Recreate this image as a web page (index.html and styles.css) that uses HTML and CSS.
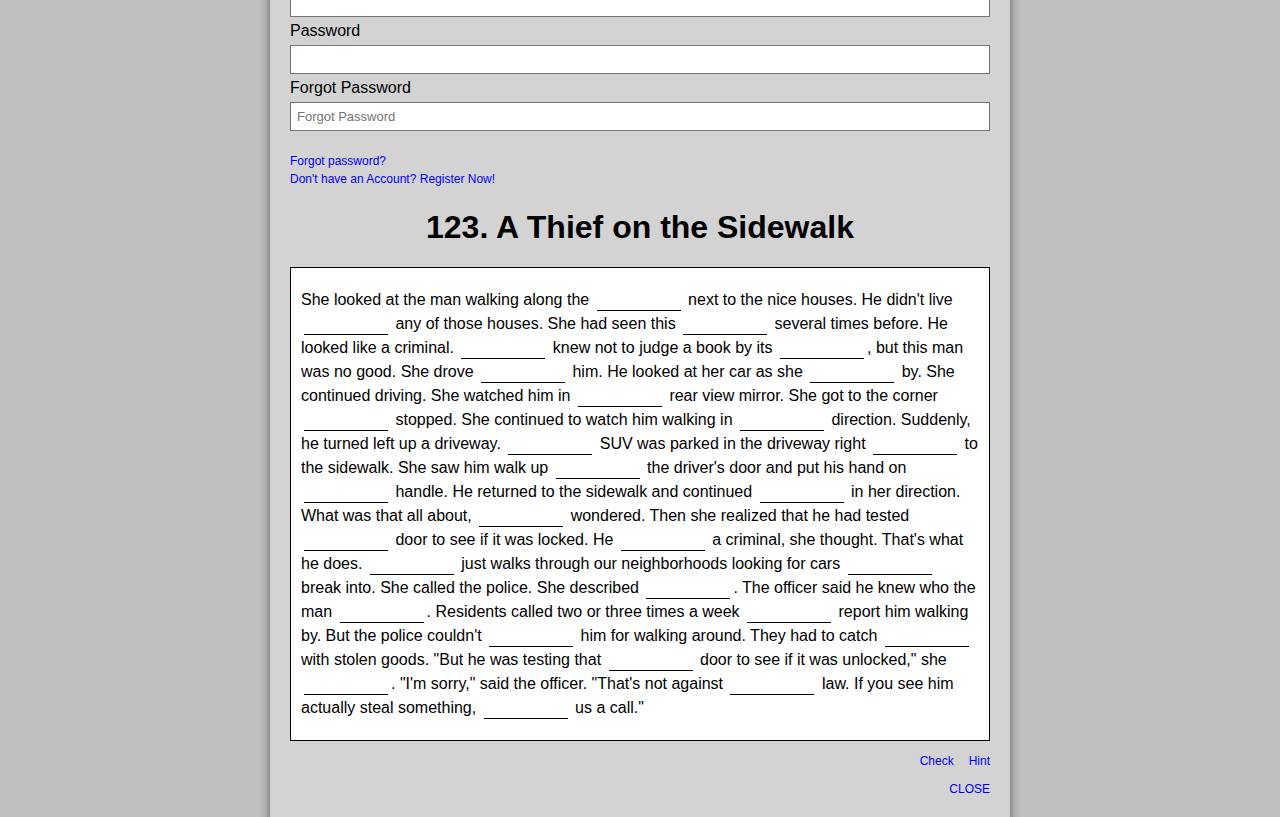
FILE: index.html
```html
<!DOCTYPE html>
<html lang="en">
<head>
<meta charset="utf-8">
<title>123. A Thief on the Sidewalk</title>
<link rel="stylesheet" href="styles.css">
</head>
<body>
<div class="panel">
  <form class="login">
    <label class="field-label">Username</label>
    <input class="field" type="text">
    <label class="field-label">Password</label>
    <input class="field" type="password">
    <label class="field-label">Forgot Password</label>
    <input class="field" type="text" placeholder="Forgot Password">
  </form>
  <div class="account-links">
    <a href="#">Forgot password?</a><br>
    <a href="#">Don't have an Account? Register Now!</a>
  </div>
  <h1 class="title">123. A Thief on the Sidewalk</h1>
  <div class="story">
    She looked at the man walking along the <input class="blank" type="text"> next to the nice houses. He didn't live <input class="blank" type="text"> any of those houses. She had seen this <input class="blank" type="text"> several times before. He looked like a criminal. <input class="blank" type="text"> knew not to judge a book by its <input class="blank" type="text">, but this man was no good. She drove <input class="blank" type="text"> him. He looked at her car as she <input class="blank" type="text"> by. She continued driving. She watched him in <input class="blank" type="text"> rear view mirror. She got to the corner <input class="blank" type="text"> stopped. She continued to watch him walking in <input class="blank" type="text"> direction. Suddenly, he turned left up a driveway. <input class="blank" type="text"> SUV was parked in the driveway right <input class="blank" type="text"> to the sidewalk. She saw him walk up <input class="blank" type="text"> the driver's door and put his hand on <input class="blank" type="text"> handle. He returned to the sidewalk and continued <input class="blank" type="text"> in her direction. What was that all about, <input class="blank" type="text"> wondered. Then she realized that he had tested <input class="blank" type="text"> door to see if it was locked. He <input class="blank" type="text"> a criminal, she thought. That's what he does. <input class="blank" type="text"> just walks through our neighborhoods looking for cars <input class="blank" type="text"> break into. She called the police. She described <input class="blank" type="text">. The officer said he knew who the man <input class="blank" type="text">. Residents called two or three times a week <input class="blank" type="text"> report him walking by. But the police couldn't <input class="blank" type="text"> him for walking around. They had to catch <input class="blank" type="text"> with stolen goods. "But he was testing that <input class="blank" type="text"> door to see if it was unlocked," she <input class="blank" type="text">. "I'm sorry," said the officer. "That's not against <input class="blank" type="text"> law. If you see him actually steal something, <input class="blank" type="text"> us a call."
  </div>
  <div class="actions">
    <a href="#">Check</a>
    <a href="#">Hint</a>
  </div>
  <div class="close-row">
    <a href="#">CLOSE</a>
  </div>
</div>
</body>
</html>
```
FILE: styles.css
```css
html, body {
  margin: 0;
  padding: 0;
}
body {
  background: #c0c0c0;
  font-family: "Liberation Sans", Arial, sans-serif;
  color: #000;
  overflow: hidden;
}
.panel {
  width: 700px;
  margin: -60px auto 0;
  padding: 20px 20px 40px;
  background: #d3d3d3;
  box-shadow: 0 0 10px rgba(0, 0, 0, 0.55);
  min-height: 900px;
}
.login {
  display: flex;
  flex-direction: column;
}
.field-label {
  font-size: 16px;
  line-height: 28px;
}
.field {
  box-sizing: border-box;
  width: 700px;
  height: 29px;
  margin: 0;
  padding: 0 6px;
  border: 1px solid #767676;
  border-radius: 0;
  background: #fff;
  font-family: "Liberation Sans", Arial, sans-serif;
  font-size: 13px;
}
.field::placeholder {
  color: #757575;
}
.account-links {
  margin-top: 21px;
  font-size: 12px;
  line-height: 18px;
}
a {
  color: #0000ff;
  text-decoration: none;
}
.title {
  margin: 21px 0 21px;
  text-align: center;
  font-size: 32px;
  font-weight: bold;
  line-height: 37px;
}
.story {
  border: 1px solid #000;
  background: #fff;
  padding: 20px 10px 20px;
  font-size: 16px;
  line-height: 24px;
}
.blank {
  box-sizing: border-box;
  width: 84px;
  margin: 0 3px;
  padding: 1px 2px;
  border: 0;
  border-bottom: 1px solid #000;
  border-radius: 0;
  background: transparent;
  font-family: "Liberation Sans", Arial, sans-serif;
  font-size: 16px;
  outline: none;
}
.actions {
  display: flex;
  justify-content: flex-end;
  gap: 15px;
  margin-top: 11px;
  font-size: 12px;
  line-height: 18px;
}
.close-row {
  display: flex;
  justify-content: flex-end;
  margin-top: 10px;
  font-size: 12px;
  line-height: 18px;
}
```
